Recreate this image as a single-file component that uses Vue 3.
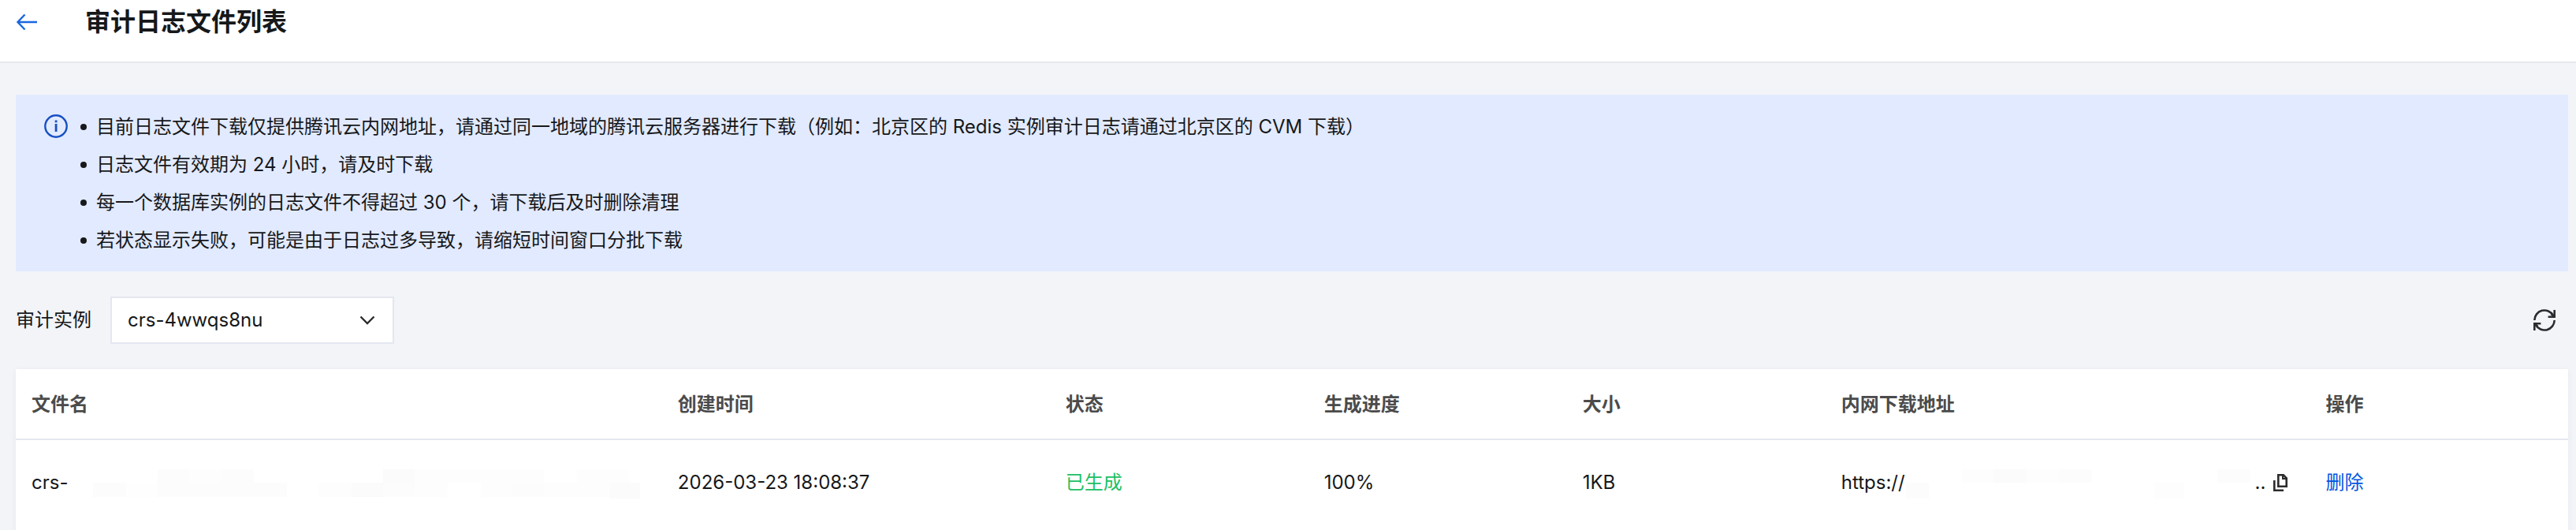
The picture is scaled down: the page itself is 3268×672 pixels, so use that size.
<template>
  <div class="audit-page">
    <header class="page-header">
      <a href="#" class="back-link" aria-label="返回">
        <svg width="28" height="22" viewBox="0 0 28 22" fill="none" stroke="currentColor" stroke-width="2.4">
          <path d="M27 11H3M11.5 1.5L2.5 11l9 9.5" />
        </svg>
      </a>
      <h1>审计日志文件列表</h1>
    </header>

    <main class="page-body">
      <section class="notice">
        <svg class="notice-icon" width="30" height="30" viewBox="0 0 30 30" fill="none">
          <circle cx="15" cy="15" r="13.7" stroke="currentColor" stroke-width="2.4" />
          <path d="M13.7 12h2.8v10h-2.8zM13.7 7.6h2.8v2.6h-2.8z" fill="currentColor" />
        </svg>
        <ul>
          <li v-for="tip in tips" :key="tip">{{ tip }}</li>
        </ul>
      </section>

      <div class="toolbar">
        <label for="instance">审计实例</label>
        <div class="select-wrap">
          <select id="instance" v-model="instance">
            <option v-for="item in instances" :key="item" :value="item">{{ item }}</option>
          </select>
          <svg class="chevron" width="20" height="12" viewBox="0 0 20 12" fill="none" stroke="currentColor" stroke-width="2.4">
            <path d="M1.5 1.5L10 10l8.5-8.5" />
          </svg>
        </div>
        <button type="button" class="icon-button refresh" aria-label="刷新">
          <svg width="28" height="28" viewBox="0 0 28 28" fill="none" stroke="currentColor" stroke-width="2.6">
            <path d="M1.3 14A12.7 12.7 0 0 1 25 7.8M26.7 14A12.7 12.7 0 0 1 3 20.2" />
            <path d="M26.7 1v8.7H18.6M1.3 27v-8.7h8.1" />
            <path d="M22.6 6l3.4 3.4M5.4 22L2 18.6" />
          </svg>
        </button>
      </div>

      <div class="table-card">
        <table>
          <colgroup>
            <col v-for="col in columns" :key="col.key" :class="`col-${col.key}`" />
          </colgroup>
          <thead>
            <tr>
              <th v-for="col in columns" :key="col.key" scope="col">{{ col.title }}</th>
            </tr>
          </thead>
          <tbody>
            <tr v-for="file in files" :key="file.createdAt">
              <td>
                <div class="cell">
                  <span>{{ file.name }}</span>
                  <svg class="mask" width="730" height="40" viewBox="0 0 730 40" aria-hidden="true">
                    <rect v-for="(b, i) in nameMask" :key="i" :x="b[0]" :y="b[1]" :width="b[2]" :height="b[3]" :fill="b[4]" />
                  </svg>
                </div>
              </td>
              <td>{{ file.createdAt }}</td>
              <td class="status-done">{{ file.status }}</td>
              <td>{{ file.progress }}</td>
              <td>{{ file.size }}</td>
              <td>
                <div class="cell">
                  <span>{{ file.url }}</span>
                  <svg class="mask" width="438" height="40" viewBox="0 0 438 40" aria-hidden="true">
                    <rect v-for="(b, i) in urlMask" :key="i" :x="b[0]" :y="b[1]" :width="b[2]" :height="b[3]" :fill="b[4]" />
                  </svg>
                  <span class="dots">..</span>
                  <button type="button" class="icon-button" aria-label="复制">
                    <svg width="18" height="22" viewBox="0 0 18 22" fill="none" stroke="currentColor" stroke-width="2.6">
                      <path d="M6.3 1.3h6.5l3.9 4v10.4H6.3z" />
                      <path d="M12 1v5h5" stroke-width="2" />
                      <path d="M1.3 8v12.7H13" />
                    </svg>
                  </button>
                </div>
              </td>
              <td><a href="#" class="action">删除</a></td>
            </tr>
          </tbody>
        </table>
      </div>
    </main>
  </div>
</template>

<script setup>
import { ref } from 'vue';

const tips = [
  '目前日志文件下载仅提供腾讯云内网地址，请通过同一地域的腾讯云服务器进行下载（例如：北京区的 Redis 实例审计日志请通过北京区的 CVM 下载）',
  '日志文件有效期为 24 小时，请及时下载',
  '每一个数据库实例的日志文件不得超过 30 个，请下载后及时删除清理',
  '若状态显示失败，可能是由于日志过多导致，请缩短时间窗口分批下载'
];

const instances = ['crs-4wwqs8nu'];
const instance = ref(instances[0]);

const columns = [
  { key: 'name', title: '文件名' },
  { key: 'created', title: '创建时间' },
  { key: 'status', title: '状态' },
  { key: 'progress', title: '生成进度' },
  { key: 'size', title: '大小' },
  { key: 'url', title: '内网下载地址' },
  { key: 'action', title: '操作' }
];

const files = [
  {
    name: 'crs-',
    createdAt: '2026-03-23 18:08:37',
    status: '已生成',
    progress: '100%',
    size: '1KB',
    url: 'https://'
  }
];

// hidden part of the value: x, y, width, height, fill
const nameMask = [
  [32, 20, 42, 18, '#fcfcfc'],
  [74, 20, 40, 18, '#fefefe'],
  [114, 3, 40, 17, '#fcfcfc'],
  [154, 3, 42, 17, '#fdfdfd'],
  [196, 3, 40, 17, '#fcfcfc'],
  [114, 20, 164, 18, '#fcfcfc'],
  [318, 20, 42, 18, '#fdfdfd'],
  [360, 20, 40, 18, '#fbfbfb'],
  [400, 3, 40, 17, '#fbfbfb'],
  [400, 20, 40, 18, '#fcfcfc'],
  [440, 3, 164, 17, '#fdfdfd'],
  [440, 20, 42, 18, '#fdfdfd'],
  [524, 20, 40, 18, '#fdfdfd'],
  [564, 20, 40, 18, '#fcfcfc'],
  [604, 20, 84, 18, '#fdfdfd'],
  [646, 3, 66, 17, '#fdfdfd'],
  [688, 20, 38, 20, '#fbfbfb']
];
const urlMask = [
  [0, 20, 30, 20, '#fcfcfc'],
  [72, 3, 40, 17, '#fdfdfd'],
  [112, 3, 42, 17, '#fbfbfb'],
  [154, 3, 40, 17, '#fdfdfd'],
  [194, 3, 42, 17, '#fcfcfc'],
  [316, 20, 38, 20, '#fdfdfd'],
  [396, 3, 42, 17, '#fcfcfc']
];
</script>

<style>
body {
  margin: 0;
  background: #f2f4f8;
}
</style>

<style scoped>
.audit-page {
  font-family: Inter, 'Noto Sans CJK SC', sans-serif;
  font-size: 24px;
  line-height: 48px;
  color: #16181a;
}
.page-header {
  display: flex;
  align-items: center;
  gap: 60px;
  padding: 4px 20px 26px;
  background: #fff;
  border-bottom: 2px solid #e5e8ed;
}
.back-link {
  display: flex;
  color: #1a66e0;
}
h1 {
  margin: 0;
  font-size: 32px;
  font-weight: 700;
}
.page-body {
  padding: 40px 10px 0 20px;
}
.notice {
  display: flex;
  padding: 17px 36px 15px;
  background: #e2eaff;
}
.notice-icon {
  flex: none;
  margin: 8px 16px 0 0;
  color: #1650c2;
}
.notice ul {
  margin: 0;
  padding: 0;
  list-style: none;
}
.notice li {
  display: flex;
  align-items: center;
  gap: 12px;
}
.notice li::before {
  content: '';
  width: 8px;
  height: 8px;
  border-radius: 50%;
  background: #16181a;
}
.toolbar {
  display: flex;
  align-items: center;
  margin: 32px 0;
}
.select-wrap {
  display: flex;
  align-items: center;
  position: relative;
  width: 360px;
  margin-left: 24px;
}
select {
  appearance: none;
  width: 100%;
  height: 60px;
  padding: 0 48px 0 20px;
  border: 2px solid #e4e7f0;
  border-radius: 0;
  background: #fff;
  color: inherit;
  font: inherit;
}
.chevron {
  position: absolute;
  right: 24px;
  color: #2a2c2e;
  pointer-events: none;
}
.icon-button {
  display: flex;
  padding: 0;
  border: 0;
  background: none;
  color: #2b2c2e;
  cursor: pointer;
}
.refresh {
  margin-left: auto;
  margin-right: 16px;
}
.table-card {
  background: #fff;
  box-shadow: 0 2px 8px rgba(40, 50, 90, 0.06);
}
table {
  width: 100%;
  table-layout: fixed;
  border-collapse: collapse;
}
.col-name {
  width: 25.32%;
}
.col-created {
  width: 15.19%;
}
.col-status,
.col-progress,
.col-size {
  width: 10.13%;
}
.col-url {
  width: 18.99%;
}
th,
td {
  text-align: left;
  white-space: nowrap;
}
th {
  padding: 21px 20px 19px;
  border-bottom: 2px solid #e5e8ef;
  color: #4b4b4b;
  font-weight: 600;
}
td {
  padding: 30px 20px 40px;
}
.cell {
  display: flex;
  align-items: center;
}
.mask {
  flex: none;
}
.dots {
  margin: 0 10px 0 6px;
}
.status-done {
  color: #20c063;
}
.action {
  color: #0055e0;
  text-decoration: none;
}
</style>
